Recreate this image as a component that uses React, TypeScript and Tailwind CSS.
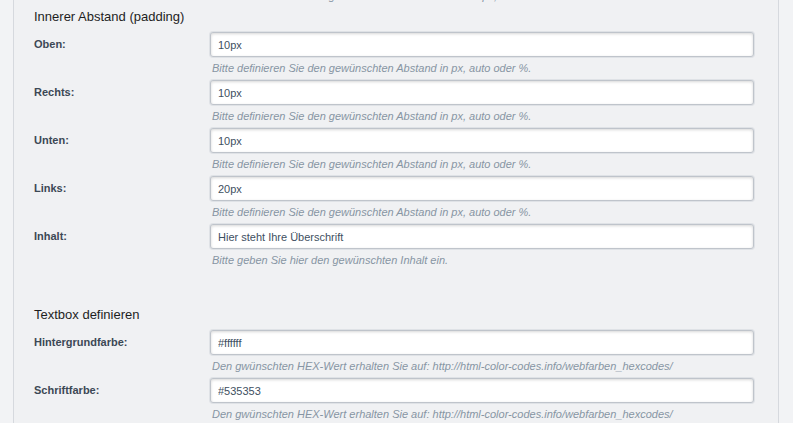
import type { ReactNode } from 'react';

type Field = {
  label: string;
  value: string;
  hint: string;
};

const abstandHint = 'Bitte definieren Sie den gewünschten Abstand in px, auto oder %.';
const hexHint = 'Den gwünschten HEX-Wert erhalten Sie auf: http://html-color-codes.info/webfarben_hexcodes/';

const paddingFields: Field[] = [
  { label: 'Oben:', value: '10px', hint: abstandHint },
  { label: 'Rechts:', value: '10px', hint: abstandHint },
  { label: 'Unten:', value: '10px', hint: abstandHint },
  { label: 'Links:', value: '20px', hint: abstandHint },
  { label: 'Inhalt:', value: 'Hier steht Ihre Überschrift', hint: 'Bitte geben Sie hier den gewünschten Inhalt ein.' },
];

const textboxFields: Field[] = [
  { label: 'Hintergrundfarbe:', value: '#ffffff', hint: hexHint },
  { label: 'Schriftfarbe:', value: '#535353', hint: hexHint },
];

function Hint({ children }: { children: ReactNode }) {
  return (
    <p className="h-[23px] leading-[23px] text-[11px] italic text-[#8795a3] whitespace-nowrap pl-[2px]">
      {children}
    </p>
  );
}

function FieldRow({ field }: { field: Field }) {
  return (
    <div className="flex">
      <label className="w-[176px] shrink-0 h-[25px] leading-[25px] text-[11px] font-bold text-[#3c4855]">
        {field.label}
      </label>
      <div className="w-[544px]">
        <input
          type="text"
          defaultValue={field.value}
          className="block w-full h-[25px] px-[7px] bg-white rounded-[3px] border border-[#bfc4cb] shadow-[inset_0_1px_3px_rgba(0,0,0,0.16),0_0_0_1px_#dfe2e6] text-[11px] text-[#3e4f5f] outline-none"
        />
        <Hint>{field.hint}</Hint>
      </div>
    </div>
  );
}

function Section({ title, fields, className }: { title: string; fields: Field[]; className?: string }) {
  return (
    <section className={className}>
      <h2 className="h-[17px] leading-[17px] text-[13px] text-[#1e1e1e] mb-[7px]">{title}</h2>
      {fields.map((f) => (
        <FieldRow key={f.label} field={f} />
      ))}
    </section>
  );
}

export default function App() {
  return (
    <div
      className="w-[793px] h-[423px] overflow-hidden bg-[#f2f3f5]"
      style={{ fontFamily: '"Liberation Sans", Arial, sans-serif' }}
    >
      <div className="flow-root ml-[13px] w-[766px] h-full bg-[#f0f1f3] border-l border-r border-[#d6d9de] pl-[20px] pr-[23px]">
        {/* Tail of the previous block, scrolled mostly out of view */}
        <div className="-mt-[15px] pl-[176px]">
          <Hint>Bitte definieren Sie den gewünschten Außenabstand in px, auto oder %.</Hint>
        </div>
        <Section title="Innerer Abstand (padding)" fields={paddingFields} />
        <Section title="Textbox definieren" fields={textboxFields} className="mt-[34px]" />
      </div>
    </div>
  );
}
